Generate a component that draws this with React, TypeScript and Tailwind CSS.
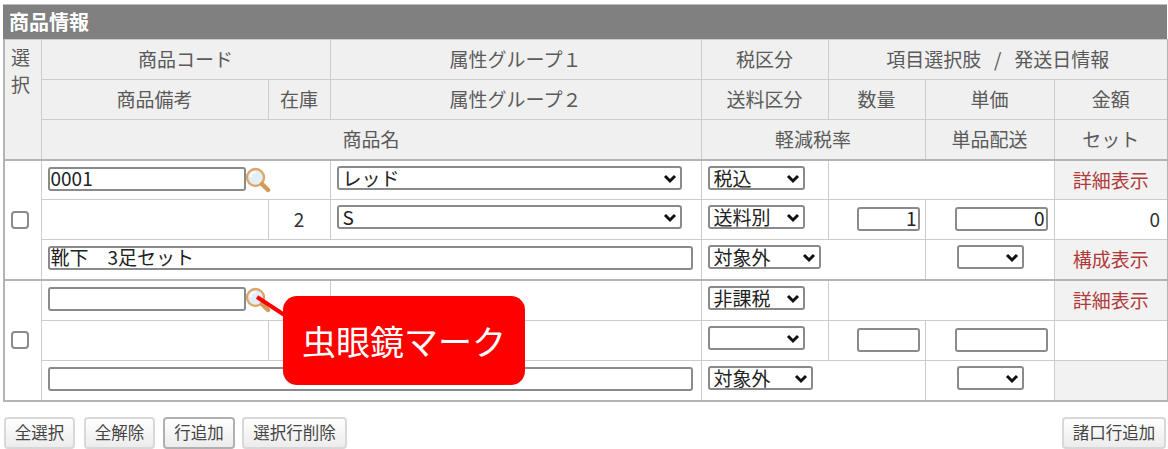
import React from "react";

const Magnifier = () => (
  <svg width="26" height="26" viewBox="0 0 26 26" className="-ml-[1px] shrink-0">
    <circle cx="10.5" cy="10.5" r="8.5" fill="#e4eef6" stroke="#dba568" strokeWidth="2.4" />
    <path d="M5.5 10a5 5 0 0 1 5-5" fill="none" stroke="#ffffff" strokeWidth="2" />
    <path d="M17 17l6 6" stroke="#d49a58" strokeWidth="4.5" strokeLinecap="round" />
  </svg>
);

const Select = ({
  value,
  className,
}: {
  value: string;
  className: string;
}) => (
  <span className={`relative inline-block h-[24px] align-top ${className}`}>
    <select
      defaultValue={value}
      className="block h-full w-full appearance-none rounded-[3px] border-2 border-[#8a8a8a] bg-white pl-[4px] text-[19px] leading-[20px] text-[#222] outline-none"
    >
      <option value={value}>{value}</option>
    </select>
    <svg
      width="14"
      height="10"
      viewBox="0 0 14 10"
      className="pointer-events-none absolute right-[5px] top-[8px]"
    >
      <path d="M2 2l5 5 5-5" fill="none" stroke="#111" strokeWidth="3" />
    </svg>
  </span>
);

const TextBox = ({
  value = "",
  className,
  right,
}: {
  value?: string;
  className: string;
  right?: boolean;
}) => (
  <input
    readOnly
    value={value}
    className={`-mt-[2px] block h-[24px] rounded-[3px] border-2 border-[#8a8a8a] bg-white px-[1px] pb-[3px] text-[19px] leading-[20px] text-[#222] outline-none ${right ? "text-right" : ""} ${className}`}
  />
);

const Head = ({
  children,
  colSpan,
  rowSpan,
  className = "",
}: {
  children: React.ReactNode;
  colSpan?: number;
  rowSpan?: number;
  className?: string;
}) => (
  <th
    colSpan={colSpan}
    rowSpan={rowSpan}
    className={`border border-[#cccccc] bg-[#f0f0f0] p-0 text-[19px] font-normal text-[#5a5a5a] ${className}`}
  >
    {children}
  </th>
);

const Cell = ({
  children,
  colSpan,
  rowSpan,
  className = "",
}: {
  children?: React.ReactNode;
  colSpan?: number;
  rowSpan?: number;
  className?: string;
}) => (
  <td
    colSpan={colSpan}
    rowSpan={rowSpan}
    className={`border border-[#cccccc] p-0 text-[19px] text-[#333] ${className}`}
  >
    {children}
  </td>
);

const LinkCell = ({ label }: { label?: string }) => (
  <td className="border border-[#cccccc] bg-[#f2f2f2] p-0 text-center text-[19px] text-[#b03a3a]">
    {label}
  </td>
);

const Btn = ({ label, className, active }: { label: string; className: string; active?: boolean }) => (
  <button
    className={`h-[32px] rounded-[4px] border-2 bg-gradient-to-b from-white to-[#ececec] text-[16.5px] text-[#444] ${active ? "border-[#b0b0b0]" : "border-[#d8d8d8]"} ${className}`}
  >
    {label}
  </button>
);

const RowCheck = () => (
  <input
    type="checkbox"
    className="ml-[6px] block h-[18px] w-[18px] appearance-none rounded-[4px] border-2 border-[#8a8a8a]"
  />
);

export default function App() {
  return (
    <div
      className="relative h-[449px] w-[1168px] overflow-hidden bg-white pl-[3px] pt-[4px]"
      style={{ fontFamily: '"Noto Sans CJK JP", "Noto Sans", sans-serif' }}
    >
      <div className="h-[35px] w-[1164px] border-t border-[#bbbbbb] bg-[#808080] pl-[6px] text-[20px] font-bold leading-[33px] text-white">
        商品情報
      </div>
      <table className="w-[1164px] table-fixed border-collapse border-2 border-t-0 border-[#b4b4b4]">
        <colgroup>
          <col className="w-[37px]" />
          <col className="w-[227px]" />
          <col className="w-[62px]" />
          <col className="w-[371px]" />
          <col className="w-[127px]" />
          <col className="w-[97px]" />
          <col className="w-[129px]" />
          <col className="w-[114px]" />
        </colgroup>
        <thead>
          <tr className="h-[40px]">
            <Head rowSpan={3} className="pl-[6px] text-left align-top leading-[27px]">
              <div className="pt-[3px]">選<br />択</div>
            </Head>
            <Head colSpan={2}>商品コード</Head>
            <Head>属性グループ１</Head>
            <Head>税区分</Head>
            <Head colSpan={3}>項目選択肢&nbsp;&nbsp;&nbsp;/&nbsp;&nbsp;&nbsp;発送日情報</Head>
          </tr>
          <tr className="h-[40px]">
            <Head>商品備考</Head>
            <Head>在庫</Head>
            <Head>属性グループ２</Head>
            <Head>送料区分</Head>
            <Head>数量</Head>
            <Head>単価</Head>
            <Head>金額</Head>
          </tr>
          <tr className="h-[40px] border-b-2 border-[#b4b4b4]">
            <Head colSpan={3}>商品名</Head>
            <Head colSpan={2}>軽減税率</Head>
            <Head>単品配送</Head>
            <Head>セット</Head>
          </tr>
        </thead>
        <tbody>
          <tr className="h-[40px]">
            <Cell rowSpan={3}>
              <RowCheck />
            </Cell>
            <Cell colSpan={2} className="pl-[6px]">
              <div className="flex items-center">
                <TextBox value="0001" className="w-[198px]" />
                <Magnifier />
              </div>
            </Cell>
            <Cell className="pl-[6px]"><Select value="レッド" className="w-[345px]" /></Cell>
            <Cell className="pl-[6px]"><Select value="税込" className="w-[97px]" /></Cell>
            <Cell colSpan={2} />
            <LinkCell label="詳細表示" />
          </tr>
          <tr className="h-[40px]">
            <Cell />
            <Cell className="text-center text-[16px]">2</Cell>
            <Cell className="pl-[6px]"><Select value="S" className="w-[345px]" /></Cell>
            <Cell className="pl-[6px]"><Select value="送料別" className="w-[97px]" /></Cell>
            <Cell className="pl-[28px]"><TextBox value="1" right className="w-[63px]" /></Cell>
            <Cell className="pl-[29px]"><TextBox value="0" right className="w-[93px]" /></Cell>
            <Cell className="pr-[7px] text-right text-[16px]">0</Cell>
          </tr>
          <tr className="h-[40px] border-b-2 border-[#b4b4b4]">
            <Cell colSpan={3} className="pl-[6px]"><TextBox value="靴下　3足セット" className="w-[645px]" /></Cell>
            <Cell colSpan={2} className="pl-[6px]"><Select value="対象外" className="w-[113px]" /></Cell>
            <Cell className="pl-[31px]"><Select value="" className="w-[67px]" /></Cell>
            <LinkCell label="構成表示" />
          </tr>
          <tr className="h-[41px]">
            <Cell rowSpan={3}>
              <RowCheck />
            </Cell>
            <Cell colSpan={2} className="pl-[6px]">
              <div className="flex items-center">
                <TextBox className="w-[198px]" />
                <Magnifier />
              </div>
            </Cell>
            <Cell />
            <Cell className="pl-[6px]"><Select value="非課税" className="w-[97px]" /></Cell>
            <Cell colSpan={2} />
            <LinkCell label="詳細表示" />
          </tr>
          <tr className="h-[40px]">
            <Cell />
            <Cell />
            <Cell />
            <Cell className="pl-[6px]"><Select value="" className="w-[97px]" /></Cell>
            <Cell className="pl-[28px]"><TextBox className="w-[63px]" /></Cell>
            <Cell className="pl-[29px]"><TextBox className="w-[93px]" /></Cell>
            <Cell />
          </tr>
          <tr className="h-[40px]">
            <Cell colSpan={3} className="pl-[6px]"><TextBox className="w-[645px]" /></Cell>
            <Cell colSpan={2} className="pl-[6px]"><Select value="対象外" className="w-[105px]" /></Cell>
            <Cell className="pl-[31px]"><Select value="" className="w-[67px]" /></Cell>
            <LinkCell />
          </tr>
        </tbody>
      </table>

      <div className="mt-[15px] flex w-[1164px] justify-between pl-[1px] pr-[1px]">
        <div className="flex">
          <Btn label="全選択" className="w-[71px]" />
          <Btn label="全解除" className="ml-[9px] w-[71px]" />
          <Btn label="行追加" active className="ml-[8px] w-[72px]" />
          <Btn label="選択行削除" className="ml-[7px] w-[105px]" />
        </div>
        <Btn label="諸口行追加" className="w-[104px]" />
      </div>

      {/* callout over the second search icon */}
      <svg width="40" height="30" viewBox="0 0 40 30" className="absolute left-[252px] top-[292px]">
        <path d="M5 5l32 21" stroke="#ff0000" strokeWidth="4" />
      </svg>
      <div className="absolute left-[283px] top-[296px] flex h-[89px] w-[242px] items-center justify-center rounded-[14px] bg-[#ff0000] text-[34px] leading-none text-white">
        虫眼鏡マーク
      </div>
    </div>
  );
}
